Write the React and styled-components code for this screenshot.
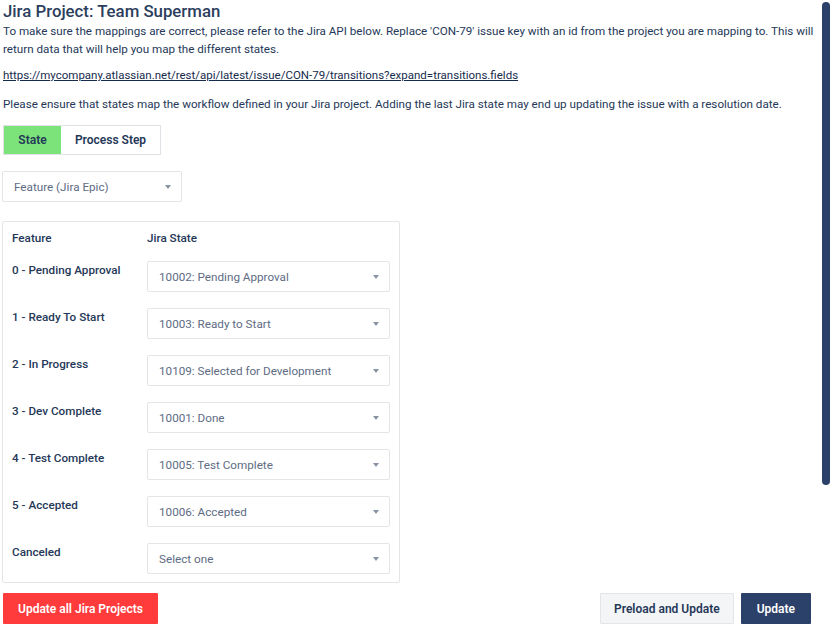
import React from "react";
import styled, { createGlobalStyle } from "styled-components";

const GlobalStyle = createGlobalStyle`
  html, body {
    margin: 0;
    background: #fff;
  }
  body {
    font-family: Roboto, "Liberation Sans", sans-serif;
    color: #253858;
  }
`;

const Page = styled.div`
  padding: 0 12px 0 3px;
`;

/* overlay scrollbar thumb, as drawn by the browser in the screenshot */
const ScrollThumb = styled.div`
  position: fixed;
  top: 2px;
  right: 3px;
  width: 8px;
  height: 483px;
  border-radius: 4px;
  background: #2c4169;
`;

const Title = styled.h1`
  margin: 0;
  font-size: 16.8px;
  font-weight: 500;
  line-height: 22px;
  color: #2c3e5d;
`;

const Text = styled.p`
  margin: ${(p) => p.$margin || "0"};
  font-size: 11.65px;
  line-height: 18px;
`;

const Link = styled.a`
  color: #172b4d;
  text-decoration: underline;
  font-size: 11.5px;
`;

const Tabs = styled.div`
  display: inline-flex;
  margin-top: 12px;
  border: 1px solid #dfe1e6;
  height: 30px;
  box-sizing: border-box;
`;

const Tab = styled.button`
  border: none;
  padding: 0;
  white-space: nowrap;
  background: ${(p) => (p.$active ? "#7be37a" : "#fff")};
  font-family: inherit;
  font-size: 12px;
  font-weight: 600;
  color: #253858;
  width: ${(p) => p.$w}px;
`;

const Select = styled.div`
  display: flex;
  align-items: center;
  justify-content: space-between;
  box-sizing: border-box;
  width: ${(p) => p.$w}px;
  height: 31px;
  padding: 0 10px 0 11px;
  border: 1px solid #e3e5e8;
  border-radius: 2px;
  font-size: 11.7px;
  color: #5e6c84;
  white-space: nowrap;
`;

const Caret = styled.span`
  width: 0;
  height: 0;
  border-left: 3px solid transparent;
  border-right: 3px solid transparent;
  border-top: 4px solid #8993a4;
`;

const TypeRow = styled.div`
  margin-top: 16px;
  margin-left: -1px;
`;

const Card = styled.div`
  margin-top: 19px;
  margin-left: -1px;
  width: 398px;
  box-sizing: border-box;
  border: 1px solid #e3e5e8;
  border-radius: 2px;
  padding: 8px 9px 8px 9px;
`;

const Grid = styled.div`
  display: grid;
  grid-template-columns: 135px 243px;
  row-gap: 16px;
`;

const HeadCell = styled.div`
  font-size: 11.7px;
  font-weight: 500;
  height: 17px;
  line-height: 17px;
  margin-bottom: -2px;
`;

const Label = styled.div`
  font-size: 11.7px;
  font-weight: 500;
  padding-top: 2px;
`;

const Footer = styled.div`
  display: flex;
  align-items: center;
  margin-top: 10px;
  padding-right: 10px;
`;

const Button = styled.button`
  height: 31px;
  box-sizing: border-box;
  padding: 0 ${(p) => p.$pad || 16}px;
  border: 1px solid ${(p) => p.$border || "transparent"};
  background: ${(p) => p.$bg};
  color: ${(p) => p.$color || "#fff"};
  font-family: inherit;
  font-size: 12px;
  font-weight: 600;
  border-radius: 1px;
  white-space: nowrap;
  margin-left: ${(p) => p.$ml || 0}px;
`;

const Spacer = styled.div`
  flex: 1;
`;

const rows = [
  ["0 - Pending Approval", "10002: Pending Approval"],
  ["1 - Ready To Start", "10003: Ready to Start"],
  ["2 - In Progress", "10109: Selected for Development"],
  ["3 - Dev Complete", "10001: Done"],
  ["4 - Test Complete", "10005: Test Complete"],
  ["5 - Accepted", "10006: Accepted"],
  ["Canceled", "Select one"],
];

export default function App() {
  return (
    <>
      <GlobalStyle />
      <ScrollThumb />
      <Page>
        <Title>Jira Project: Team Superman</Title>
        <Text $margin="0">
          To make sure the mappings are correct, please refer to the Jira API below. Replace
          'CON-79' issue key with an id from the project you are mapping to. This will return
          data that will help you map the different states.
        </Text>
        <Text $margin="8px 0 0">
          <Link href="#">
            https://mycompany.atlassian.net/rest/api/latest/issue/CON-79/transitions?expand=transitions.fields
          </Link>
        </Text>
        <Text $margin="11px 0 0">
          Please ensure that states map the workflow defined in your Jira project. Adding the last
          Jira state may end up updating the issue with a resolution date.
        </Text>
        <Tabs>
          <Tab $active $w={57}>State</Tab>
          <Tab $w={99}>Process Step</Tab>
        </Tabs>
        <TypeRow>
          <Select $w={180}>
            Feature (Jira Epic)
            <Caret />
          </Select>
        </TypeRow>
        <Card>
          <Grid>
            <HeadCell>Feature</HeadCell>
            <HeadCell>Jira State</HeadCell>
            {rows.map(([label, value]) => (
              <React.Fragment key={label}>
                <Label>{label}</Label>
                <Select $w={243}>
                  {value}
                  <Caret />
                </Select>
              </React.Fragment>
            ))}
          </Grid>
        </Card>
        <Footer>
          <Button $bg="#ff3b3b" $pad={14}>Update all Jira Projects</Button>
          <Spacer />
          <Button $bg="#f4f5f7" $border="#e3e5e8" $color="#253858" $pad={13}>
            Preload and Update
          </Button>
          <Button $bg="#2c4169" $ml={7} $pad={15}>Update</Button>
        </Footer>
      </Page>
    </>
  );
}
